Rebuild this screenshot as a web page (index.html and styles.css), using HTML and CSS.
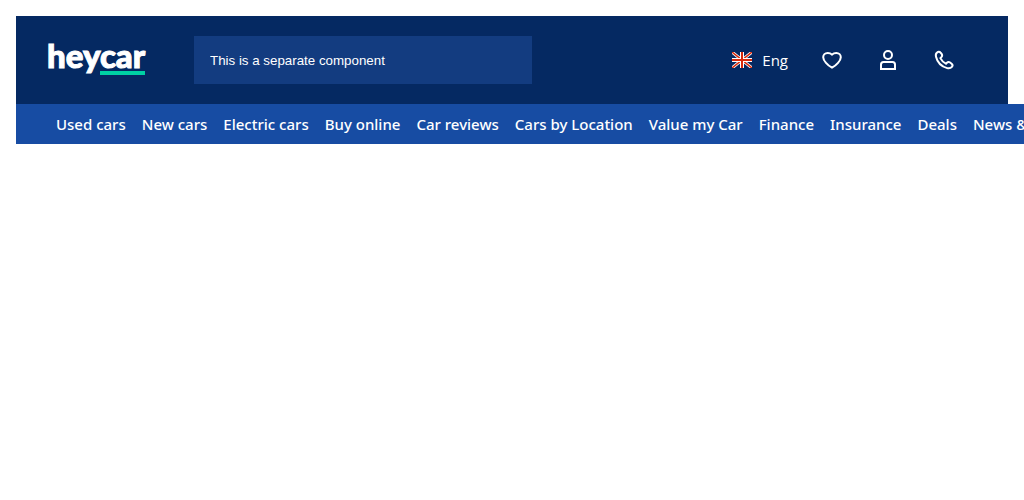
FILE: index.html
```html
<!DOCTYPE html>
<html lang="en">
<head>
<meta charset="utf-8">
<meta name="viewport" content="width=device-width, initial-scale=1">
<title>heycar</title>
<link rel="stylesheet" href="styles.css">
</head>
<body>
<header class="header">
  <div class="topbar">
    <a class="logo" href="#" aria-label="heycar home">
      <svg width="98" height="34" viewBox="0 0 98 34" aria-hidden="true">
        <text class="logo-text" x="-1" y="25">heycar</text>
        <path d="M52 28h45v4H52z" fill="#00d1a4"/>
      </svg>
    </a>
    <input class="search" type="search" aria-label="Search" placeholder="This is a separate component">
    <div class="actions">
      <button class="language" type="button">
        <svg width="20" height="16" viewBox="0 0 20 16" aria-hidden="true">
          <path d="M0 0l20 16M20 0L0 16" stroke="#fff" stroke-width="3"/>
          <path d="M0 0l20 16M20 0L0 16" stroke="#d8290b" stroke-width="1.500"/>
          <path d="M10 0v16M0 8h20" stroke="#fff" stroke-width="4"/>
          <path d="M10 0v16M0 8h20" stroke="#d8290b" stroke-width="2"/>
        </svg>
        Eng
      </button>
      <button class="icon-button" type="button" aria-label="Favourites">
        <svg width="24" height="24" viewBox="0 0 24 24" aria-hidden="true"><path d="M12 6.600C10.800 5.400 9.300 4.900 7.700 4.900 5 4.900 3.200 6.800 3.200 9.200c0 3.400 4.500 8 8.800 10.500 4.300-2.500 8.800-7.100 8.800-10.500 0-2.400-1.800-4.300-4.500-4.300-1.600 0-3.100.5-4.300 1.700z"/></svg>
      </button>
      <button class="icon-button" type="button" aria-label="Account">
        <svg width="24" height="24" viewBox="0 0 24 24" aria-hidden="true"><circle cx="12" cy="7" r="4"/><path d="M5 21v-4.500Q5 14 7.500 14h9Q19 14 19 16.500V21z"/></svg>
      </button>
      <button class="icon-button" type="button" aria-label="Call us">
        <svg width="24" height="24" viewBox="0 0 24 24" aria-hidden="true"><path d="M5 4.600C3.800 5.500 3.600 7 4 8.700c1.300 5.400 5.700 9.800 11.200 11.400 2 .6 3.600.1 4.700-1.200.9-1.100.8-2.300-.3-3.200l-1.500-1.200c-1.100-.8-2.300-.7-3.200.2l-1 1c-2.300-1.100-4.300-3.200-5.500-5.600l1-1c.9-.9.9-2.100.2-3.200L8.400 4.500c-.9-1.100-2.200-.9-3.400.1z"/></svg>
      </button>
    </div>
  </div>
  <nav class="nav" aria-label="Main">
    <a href="#">Used cars</a>
    <a href="#">New cars</a>
    <a href="#">Electric cars</a>
    <a href="#">Buy online</a>
    <a href="#">Car reviews</a>
    <a href="#">Cars by Location</a>
    <a href="#">Value my Car</a>
    <a href="#">Finance</a>
    <a href="#">Insurance</a>
    <a href="#">Deals</a>
    <a href="#">News &amp; Advice</a>
  </nav>
</header>
</body>
</html>
```
FILE: styles.css
```css
* { box-sizing: border-box; }
body {
  margin: 0;
  padding: 16px;
  background: #fff;
  color: #fff;
  font-family: "Noto Sans", sans-serif;
}
.topbar {
  display: flex;
  align-items: center;
  padding: 20px 36px 20px 32px;
  background: #052962;
}
.logo {
  display: flex;
  flex: none;
  margin-right: 48px;
}
.logo svg { overflow: visible; }
.logo-text {
  fill: #fff;
  stroke: #fff;
  stroke-width: 1;
  font-family: Lato, sans-serif;
  font-size: 33px;
  font-weight: 900;
}
.search {
  flex: 0 1 338px;
  min-width: 0;
  height: 48px;
  padding: 0 16px;
  border: 0;
  border-radius: 0;
  background: #133c80;
  color: #fff;
  font-family: "Liberation Sans", Arial, sans-serif;
  appearance: none;
}
.search::placeholder { color: #fff; opacity: 1; }
.actions {
  display: flex;
  align-items: center;
  margin-left: auto;
}
.actions button {
  display: flex;
  align-items: center;
  height: 40px;
  padding: 0 16px;
  border: 0;
  background: none;
  color: #fff;
  cursor: pointer;
}
.actions .language {
  gap: 10px;
  font-family: "Open Sans", "Noto Sans", sans-serif;
  font-size: 15px;
}
.icon-button svg {
  fill: none;
  stroke: #fff;
  stroke-width: 2;
}
.nav {
  display: flex;
  gap: 16px;
  width: max-content;
  min-width: 100%;
  padding: 0 40px;
  background: #174ca3;
}
.nav a {
  color: #fff;
  font-size: 15px;
  font-weight: 500;
  line-height: 40px;
  text-decoration: none;
  white-space: nowrap;
}
```
